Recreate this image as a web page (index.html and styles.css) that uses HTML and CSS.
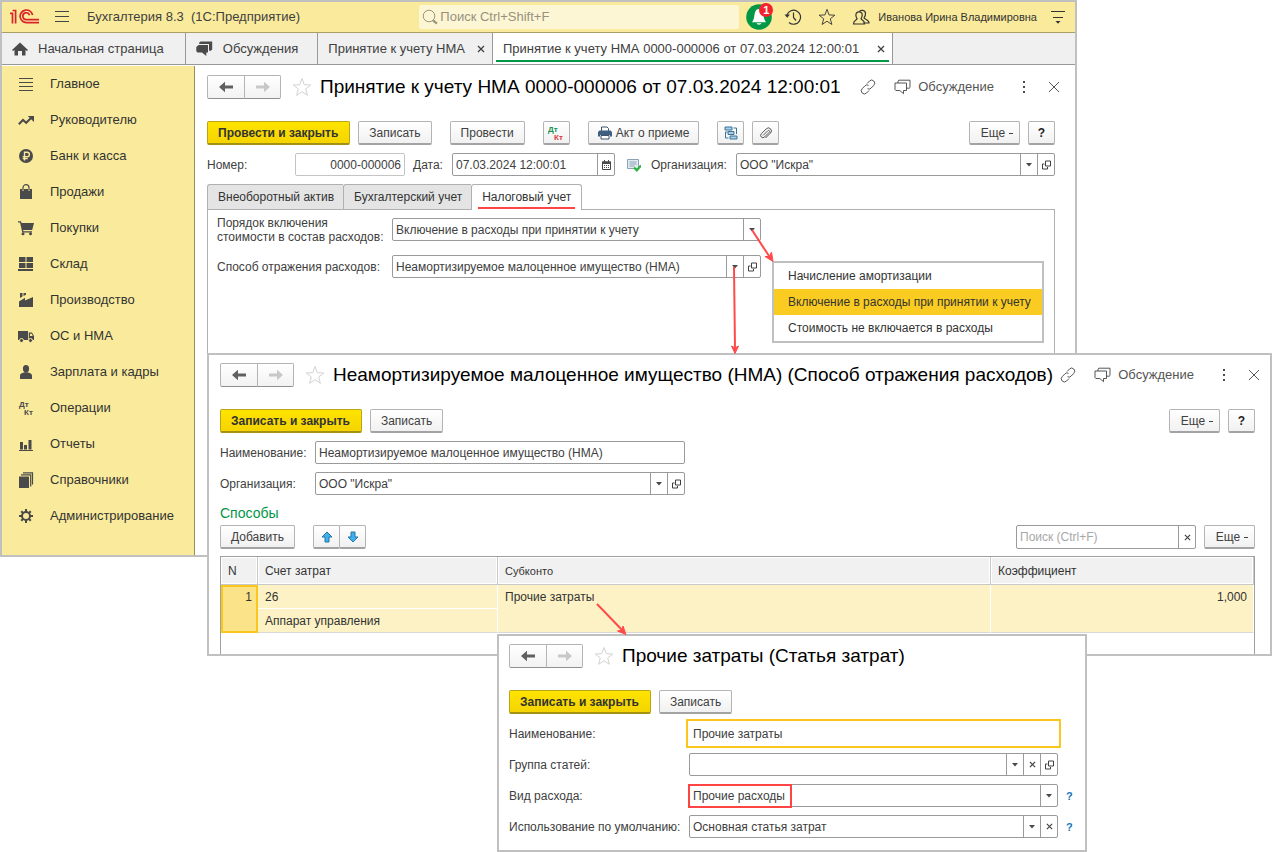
FILE: index.html
```html
<!DOCTYPE html>
<html lang="ru">
<head>
<meta charset="utf-8">
<title>Бухгалтерия 8.3 (1С:Предприятие)</title>
<link rel="stylesheet" href="styles.css">
</head>
<body>
<svg class="sprite" aria-hidden="true">
  <symbol id="back" viewBox="0 0 14 12"><path d="M0 6 6 .8V4.600h8v2.800H6v3.800z"/></symbol>
  <symbol id="forward" viewBox="0 0 14 12"><path d="M14 6 8 .8V4.600H0v2.800h8v3.800z"/></symbol>
  <symbol id="star" viewBox="0 0 20 20"><path d="M10 1.500 12.300 7.700 18.700 8 13.700 12 15.400 18.300 10 14.700 4.600 18.300 6.300 12 1.300 8 7.700 7.700z" fill="none" stroke="currentColor"/></symbol>
  <symbol id="link" viewBox="0 0 16 16"><path d="M7 4.500 9.500 2a3 3 0 0 1 4.300 4.300L11 9.200a3 3 0 0 1-3.500.5M9 11.500 6.500 14A3 3 0 0 1 2.200 9.700L5 6.800a3 3 0 0 1 3.500-.5" fill="none" stroke="currentColor"/></symbol>
  <symbol id="chat" viewBox="0 0 17 15"><path d="M1 3.500h11.500v7.500H9.500v3.200L5.800 11H1.800L1 10.200zM4 3.500V1.500l.8-.8H16v7.200l-.8.8h-2.700" fill="none" stroke="currentColor"/></symbol>
  <symbol id="close" viewBox="0 0 12 12"><path d="M1 1l10 10M11 1 1 11" stroke="currentColor"/></symbol>
  <symbol id="small-close" viewBox="0 0 8 8"><path d="M1 1l6 6M7 1 1 7" stroke="currentColor" stroke-width="1.300"/></symbol>
  <symbol id="dots" viewBox="0 0 4 12"><path d="M1 0h2v2H1zM1 5h2v2H1zM1 10h2v2H1z"/></symbol>
  <symbol id="caret" viewBox="0 0 6 4"><path d="M0 0h6L3 3.500z"/></symbol>
  <symbol id="open" viewBox="0 0 9 9"><path d="M3.500.5h5v5h-5zM2.500 3.500h-2v5h5v-2" fill="none" stroke="currentColor"/></symbol>
</svg>

<main class="desktop">
  <section class="window window-main" aria-label="Бухгалтерия 8.3">
    <header class="topbar">
      <svg class="logo" viewBox="0 0 30 16" role="img" aria-label="1С"><path d="M0 4.300h2.500v10.200M2.600 1.500h3v13M22.600 6A6.300 6.300 0 1 0 16.500 13.600H29M19.500 6.200A3.400 3.400 0 1 0 16.500 10.600H29" fill="none" stroke="#d9232b" stroke-width="1.700"/></svg>
      <button class="bare menu-button" aria-label="Меню"><svg class="i14" viewBox="0 0 14 12"><path d="M0 .5h14M0 5.500h14M0 10.500h14" stroke="#444"/></svg></button>
      <span class="app-name">Бухгалтерия 8.3 &nbsp;(1С:Предприятие)</span>
      <label class="search">
        <svg class="i16" viewBox="0 0 16 16"><circle cx="7" cy="7" r="5.800"/><path d="M11 11.300l4 3.400" stroke-width="2.200"/></svg>
        <input type="text" aria-label="Поиск" placeholder="Поиск Ctrl+Shift+F">
      </label>
      <button class="bare bell" aria-label="Уведомления">
        <svg class="i26" viewBox="0 0 26 26"><circle cx="13" cy="13" r="12.800" fill="#009846"/><path d="M13 5c-3.500 0-4 3-4.600 6.500C8 14.500 7.500 16 6 18.200h14c-1.500-2.200-2-3.700-2.400-6.700C17 8 16.500 5 13 5zM10.500 19.200h5c-.5 1.900-4.500 1.900-5 0z" fill="#fff"/></svg>
        <span class="badge">1</span>
      </button>
      <button class="bare" aria-label="История"><svg class="i18" viewBox="0 0 18 18"><g fill="none" stroke="#333" stroke-width="1.200"><path d="M3 7A7 7 0 1 1 5 14.500"/><path d="M9.500 4.500V9.500l2.500 3"/></g><path d="M.5 6.500h5.500L3.200 9.800z" fill="#333"/></svg></button>
      <button class="bare" aria-label="Избранное"><svg class="i18 dark"><use href="#star"/></svg></button>
      <button class="bare" aria-label="Пользователи"><svg class="i18" viewBox="0 0 18 18"><g fill="none" stroke="#333" stroke-width="1.200"><path d="M7.500 3.500C8 1.800 13.500 1.500 13.500 5.500c0 2.500-1 3.500-1.500 4.500 1 1.500 5 1.500 5 5h-5.500"/><path d="M7 3.800c2.500 0 3.400 1.700 3.200 3.700-.2 1.800-1 2.500-1.200 3.300.8 1.700 3.500 1.200 3.500 5.200H1.500c0-4 3-3.700 3.600-5.200C4.600 9.800 4 9 3.900 7.500c-.1-2 .8-3.700 3.100-3.700z"/></g></svg></button>
      <span class="user">Иванова Ирина Владимировна</span>
      <button class="bare" aria-label="Настройки"><svg class="i16" viewBox="0 0 16 16"><path d="M1 2.500h14M3 8.500h10" stroke="#333" stroke-width="1.200"/><path d="M5.500 12h5L8 14.800z" fill="#333"/></svg></button>
    </header>

    <nav class="tabs" aria-label="Открытые окна">
      <button class="tab"><svg class="i16" viewBox="0 0 16 16"><path d="M8 1.500 16 9l-1 1-1.500-1v5.500H10V10H6v4.500H2.500V9L1 10 0 9z"/></svg><span>Начальная страница</span></button>
      <button class="tab tab-chat"><svg class="i17" viewBox="0 0 17 16"><path d="M2.500 4H12v7.500h-1.700V15L6 11.500H1.500L.3 10.300V6z"/><path d="M3.200 3V1.500L4.700.5h11.500v8l-1.500 1.200H13V3z"/></svg><span>Обсуждения</span></button>
      <button class="tab tab-doc"><span>Принятие к учету НМА</span><svg class="i8"><use href="#small-close"/></svg></button>
      <button class="tab tab-doc active"><span>Принятие к учету НМА 0000-000006 от 07.03.2024 12:00:01</span><svg class="i8"><use href="#small-close"/></svg></button>
    </nav>

    <div class="body">
      <nav class="sidebar" aria-label="Разделы">
        <a href="#"><svg viewBox="0 0 16 16"><path d="M1 2.500h14M1 6.500h14M1 10.500h14M1 14.500h14" stroke="#4a4a4a"/></svg>Главное</a>
        <a href="#"><svg viewBox="0 0 16 16"><path d="M.8 12.300 5 8l3.200 2.800L13 6" fill="none" stroke="#4a4a4a" stroke-width="2"/><path d="M9.800 4H16v6z"/></svg>Руководителю</a>
        <a href="#"><svg viewBox="0 0 16 16"><circle cx="8" cy="8" r="7"/><path d="M6.500 12.500V4.200h2.700a2.200 2.200 0 0 1 0 4.400H4.700M4.700 10.500h5" fill="none" stroke="#faeb9c" stroke-width="1.400"/></svg>Банк и касса</a>
        <a href="#"><svg viewBox="0 0 16 16"><path d="M2 5h2.500v2h1V5h5v2h1V5H14v10H2z"/><path d="M5 5.500V3.700a3 3 0 0 1 6 0v1.800" fill="none" stroke="#4a4a4a" stroke-width="1.200"/></svg>Продажи</a>
        <a href="#"><svg viewBox="0 0 16 16"><path d="M0 1.200h3L3.600 3H16l-1.800 7H5.100l.4 1.200H14v1.200H4.300L2 2.500H0z"/><circle cx="5" cy="13.700" r="1.500"/><circle cx="12.500" cy="13.700" r="1.500"/></svg>Покупки</a>
        <a href="#"><svg viewBox="0 0 16 16"><path d="M1 1h6.500v5H1zM8.500 1H15v5H8.500zM1 7h6.500v5H1zM8.500 7H15v5H8.500zM0 13h15v2H0z"/></svg>Склад</a>
        <a href="#"><svg viewBox="0 0 16 16"><path d="M1 15V9.500l6-3.800V8.500L15 5v10zM2 1h2.500v3.500L2 6zM5.500 1H8v1.800L5.500 4z"/></svg>Производство</a>
        <a href="#"><svg viewBox="0 0 16 16"><path d="M0 3h10v9H0zM10.800 4.500H14L16 8v4h-5.200z"/><path d="M12 5.800h1.800L14.700 8H12z" fill="#faeb9c"/><g stroke="#faeb9c"><circle cx="3.500" cy="12.500" r="2"/><circle cx="12.500" cy="12.500" r="2"/></g></svg>ОС и НМА</a>
        <a href="#"><svg viewBox="0 0 16 16"><ellipse cx="8" cy="4.700" rx="3.100" ry="3.700"/><path d="M2 15v-3.500C2 9.500 5 9 6.500 8.300h3C11 9 14 9.500 14 11.500V15z"/></svg>Зарплата и кадры</a>
        <a href="#"><svg viewBox="0 0 16 16" class="dtkt"><text x="1" y="7">Дт</text><text x="6" y="15">Кт</text></svg>Операции</a>
        <a href="#"><svg viewBox="0 0 16 16"><path d="M1 14h14v1H1zM2 6h3v7.500H2zM6 9h3v4.500H6zM10.500 4h3v9.500h-3z"/></svg>Отчеты</a>
        <a href="#"><svg viewBox="0 0 16 16"><path d="M1 4.500h10V16H1z"/><path d="M3 2.800h9.700V14.500M5 .8h9.500V12.500" fill="none" stroke="#4a4a4a" stroke-width="1.200"/></svg>Справочники</a>
        <a href="#"><svg viewBox="0 0 16 16"><circle cx="8" cy="8" r="4" fill="none" stroke="#4a4a4a" stroke-width="2"/><path d="M8 1v3M8 12v3M1 8h3M12 8h3M3.200 3.200l1.900 1.900M10.900 10.900l1.900 1.900M12.800 3.200l-1.900 1.900M5.100 10.900l-1.900 1.900" stroke="#4a4a4a" stroke-width="2"/></svg>Администрирование</a>
      </nav>

      <div class="form">
        <div class="title-row">
          <div class="history"><button aria-label="Назад"><svg><use href="#back"/></svg></button><button aria-label="Вперед" disabled><svg><use href="#forward"/></svg></button></div>
          <svg class="fav"><use href="#star"/></svg>
          <h1>Принятие к учету НМА 0000-000006 от 07.03.2024 12:00:01</h1>
          <div class="title-tools">
            <button class="bare" aria-label="Ссылка"><svg class="i16"><use href="#link"/></svg></button>
            <button class="bare discuss"><svg class="i17"><use href="#chat"/></svg>Обсуждение</button>
            <button class="bare dots" aria-label="Действия"><svg><use href="#dots"/></svg></button>
            <button class="bare" aria-label="Закрыть"><svg class="i12"><use href="#close"/></svg></button>
          </div>
        </div>

        <div class="toolbar">
          <button class="btn primary">Провести и закрыть</button>
          <button class="btn">Записать</button>
          <button class="btn apart">Провести</button>
          <button class="btn square apart" aria-label="Дт Кт"><svg class="i16 dtkt" viewBox="0 0 16 16"><text x="0" y="7" fill="#15924b">Дт</text><text x="6" y="15" fill="#e03a3e">Кт</text></svg></button>
          <button class="btn apart print"><svg class="i14" viewBox="0 0 14 14"><path d="M3.500 5V1h5.500l1.500 1.500V5" fill="#fff" stroke="#3f546b"/><path d="M0 6l1.500-1.500h11L14 6v4.500h-2V9H2v1.500H0z" fill="#3f5f80"/><path d="M3 9.500h8v3.500H3z" fill="#fff" stroke="#3f546b"/></svg>Акт о приеме</button>
          <button class="btn square apart" aria-label="Структура"><svg class="i14" viewBox="0 0 14 14"><g fill="#a9cfe6" stroke="#3c7499"><path d="M1 1h7v3H1zM4 5.500h6v3H4zM6 10h7v3H6z"/><path d="M9.500 2h3v6M3.500 6h-2v6h3" fill="none"/></g></svg></button>
          <button class="btn square" aria-label="Вложения"><svg class="i14" viewBox="0 0 14 14"><path d="M4 9.500 8.800 4.700a1 1 0 0 1 1.500 1.500L5.500 11A2.200 2.200 0 0 1 2.300 7.800l5-5a2.900 2.900 0 0 1 4.200 4.200L6.500 12" fill="none" stroke="#555"/></svg></button>
          <span class="spacer"></span>
          <button class="btn more">Еще <i></i></button>
          <button class="btn square help">?</button>
        </div>

        <div class="doc-fields">
          <label class="number-label" for="number">Номер:</label>
          <div class="field pale number"><input id="number" type="text" value="0000-000006"></div>
          <label class="date-label" for="date">Дата:</label>
          <div class="field date"><input id="date" type="text" value="07.03.2024 12:00:01"><button class="cell" aria-label="Календарь"><svg class="i9" viewBox="0 0 9 10"><path d="M.5 2h8v7.500h-8z" fill="none" stroke="#444"/><path d="M0 1.500h9V4H0zM2 0h1v2H2zM6 0h1v2H6zM2 5h1v1H2zM4 5h1v1H4zM6 5h1v1H6zM2 7h1v1H2zM4 7h1v1H4zM6 7h1v1H6z"/></svg></button></div>
          <svg class="i14 posted" viewBox="0 0 14 14"><path d="M.5 1.500h11v9H.5z" fill="#e3ebf2" stroke="#8ba0b3"/><path d="M2.500 4h7M2.500 6h7M2.500 8h5" stroke="#8ba0b3"/><path d="M7 9.500l2.800 2.800L14 7.500" fill="none" stroke="#2fb344" stroke-width="2.200"/></svg>
          <label class="org-label" for="org">Организация:</label>
          <div class="field grow"><select id="org"><option>ООО "Искра"</option></select><span class="cell"><svg class="caret"><use href="#caret"/></svg></span><button class="cell" aria-label="Открыть"><svg class="i9"><use href="#open"/></svg></button></div>
        </div>

        <div class="pages" role="tablist">
          <button role="tab">Внеоборотный актив</button>
          <button role="tab">Бухгалтерский учет</button>
          <button role="tab" aria-selected="true"><span>Налоговый учет</span></button>
        </div>
        <div class="page">
          <label for="order">Порядок включения<br>стоимости в состав расходов:</label>
          <div class="field"><select id="order"><option>Включение в расходы при принятии к учету</option><option>Начисление амортизации</option><option>Стоимость не включается в расходы</option></select><span class="cell"><svg class="caret"><use href="#caret"/></svg></span></div>
          <label for="method">Способ отражения расходов:</label>
          <div class="field"><select id="method"><option>Неамортизируемое малоценное имущество (НМА)</option></select><span class="cell"><svg class="caret"><use href="#caret"/></svg></span><button class="cell" aria-label="Открыть"><svg class="i9"><use href="#open"/></svg></button></div>
        </div>
      </div>
    </div>
  </section>

  <ul class="dropdown" role="listbox" aria-label="Порядок включения">
    <li role="option">Начисление амортизации</li>
    <li role="option" aria-selected="true">Включение в расходы при принятии к учету</li>
    <li role="option">Стоимость не включается в расходы</li>
  </ul>

  <section class="window window-method" aria-label="Способ отражения расходов">
    <div class="title-row">
      <div class="history"><button aria-label="Назад"><svg><use href="#back"/></svg></button><button aria-label="Вперед" disabled><svg><use href="#forward"/></svg></button></div>
      <svg class="fav"><use href="#star"/></svg>
      <h2>Неамортизируемое малоценное имущество (НМА) (Способ отражения расходов)</h2>
      <div class="title-tools">
        <button class="bare" aria-label="Ссылка"><svg class="i16"><use href="#link"/></svg></button>
        <button class="bare discuss"><svg class="i17"><use href="#chat"/></svg>Обсуждение</button>
        <button class="bare dots" aria-label="Действия"><svg><use href="#dots"/></svg></button>
        <button class="bare" aria-label="Закрыть"><svg class="i12"><use href="#close"/></svg></button>
      </div>
    </div>
    <div class="toolbar">
      <button class="btn primary">Записать и закрыть</button>
      <button class="btn">Записать</button>
      <span class="spacer"></span>
      <button class="btn more">Еще <i></i></button>
      <button class="btn square help">?</button>
    </div>
    <div class="method-fields">
      <label for="m-name">Наименование:</label>
      <div class="field"><input id="m-name" type="text" value="Неамортизируемое малоценное имущество (НМА)"></div>
      <label for="m-org">Организация:</label>
      <div class="field"><select id="m-org"><option>ООО "Искра"</option></select><span class="cell"><svg class="caret"><use href="#caret"/></svg></span><button class="cell" aria-label="Открыть"><svg class="i9"><use href="#open"/></svg></button></div>
    </div>
    <h3>Способы</h3>
    <div class="toolbar table-bar">
      <button class="btn">Добавить</button>
      <div class="pair">
        <button class="btn square" aria-label="Вверх"><svg class="i12" viewBox="0 0 12 12"><path d="M6 1l5 5H8v5H4V6H1z" fill="#3fb0ee" stroke="#2575a8"/></svg></button><button class="btn square" aria-label="Вниз"><svg class="i12" viewBox="0 0 12 12"><path d="M6 11l5-5H8V1H4v5H1z" fill="#3fb0ee" stroke="#2575a8"/></svg></button>
      </div>
      <span class="spacer"></span>
      <div class="field find"><input type="text" aria-label="Поиск" placeholder="Поиск (Ctrl+F)"><button class="cell" aria-label="Очистить"><svg class="i7"><use href="#small-close"/></svg></button></div>
      <button class="btn more">Еще <i></i></button>
    </div>
    <div class="grid">
      <table>
        <colgroup><col class="c-n"><col class="c-acc"><col><col class="c-k"></colgroup>
        <thead><tr><th>N</th><th>Счет затрат</th><th class="sub">Субконто</th><th>Коэффициент</th></tr></thead>
        <tbody>
          <tr><td rowspan="2" class="num current">1</td><td>26</td><td rowspan="2" class="last">Прочие затраты</td><td rowspan="2" class="num last">1,000</td></tr>
          <tr><td class="last">Аппарат управления</td></tr>
        </tbody>
      </table>
    </div>
  </section>

  <section class="window window-item" aria-label="Статья затрат">
    <div class="title-row">
      <div class="history"><button aria-label="Назад"><svg><use href="#back"/></svg></button><button aria-label="Вперед" disabled><svg><use href="#forward"/></svg></button></div>
      <svg class="fav"><use href="#star"/></svg>
      <h2>Прочие затраты (Статья затрат)</h2>
    </div>
    <div class="toolbar">
      <button class="btn primary">Записать и закрыть</button>
      <button class="btn">Записать</button>
    </div>
    <div class="item-fields">
      <label for="i-name">Наименование:</label>
      <div class="field focused"><input id="i-name" type="text" value="Прочие затраты"></div>
      <label for="i-group">Группа статей:</label>
      <div class="field"><select id="i-group"><option></option></select><span class="cell"><svg class="caret"><use href="#caret"/></svg></span><button class="cell" aria-label="Очистить"><svg class="i7"><use href="#small-close"/></svg></button><button class="cell" aria-label="Открыть"><svg class="i9"><use href="#open"/></svg></button></div>
      <label for="i-kind">Вид расхода:</label>
      <div class="field"><select id="i-kind"><option>Прочие расходы</option></select><span class="cell"><svg class="caret"><use href="#caret"/></svg></span><span class="mark"></span></div>
      <a href="#" class="hint">?</a>
      <label for="i-use">Использование по умолчанию:</label>
      <div class="field"><select id="i-use"><option>Основная статья затрат</option></select><span class="cell"><svg class="caret"><use href="#caret"/></svg></span><button class="cell" aria-label="Очистить"><svg class="i7"><use href="#small-close"/></svg></button></div>
      <a href="#" class="hint">?</a>
    </div>
  </section>

  <svg class="arrow arrow-order" viewBox="0 0 26 36"><path d="M2 1 21 30"/><path class="head" d="M23 32.500 15 27.500 19.500 27.500 21.500 23z"/></svg>
  <svg class="arrow arrow-method" viewBox="0 0 12 90"><path d="M5 1 6 83"/><path class="head" d="M6 87.500 2.500 80 6 82 9.500 80z"/></svg>
  <svg class="arrow arrow-item" viewBox="0 0 32 34"><path d="M2 1 29 29"/><path class="head" d="M31 31.500 22.500 28 27 27 28 23z"/></svg>
</main>
</body>
</html>
```

FILE: styles.css
```css
* { box-sizing: border-box; }

body {
  margin: 0;
  background: #fff;
  color: #404040;
  font: 12px/14px "Liberation Sans", Arial, sans-serif;
}

button, input, select { font: inherit; color: inherit; margin: 0; }
h1, h2, h3 { margin: 0; font-weight: normal; }
svg { fill: #4a4a4a; flex: none; display: block; }
.sprite { position: absolute; width: 0; height: 0; }

.i7 { width: 7px; height: 7px; }
.i8 { width: 8px; height: 8px; }
.i9 { width: 9px; height: 10px; }
.i12 { width: 12px; height: 12px; }
.i14 { width: 14px; height: 14px; }
.i16 { width: 16px; height: 16px; }
.i17 { width: 17px; height: 16px; }
.i18 { width: 18px; height: 18px; }
.i26 { width: 26px; height: 26px; }
.dark { color: #333; }
.caret { width: 6px; height: 4px; }
.dtkt text { font: bold 8px "Liberation Sans", sans-serif; }

/* Windows */
.desktop { position: relative; min-height: 852px; }
.window { position: absolute; background: #fff; border: 2px solid #c0c0c0; }
.window-main { left: 0; right: 195px; top: 0; }
.window-method { left: 207px; right: 0; top: 353px; padding: 8px 15px 0 11px; }
.window-item { left: 497px; right: 185px; top: 634px; padding: 8px 27px 12px 10px; }

.bare { display: flex; align-items: center; padding: 0; border: 0; background: none; }

/* Top bar */
.topbar {
  display: flex;
  align-items: center;
  height: 31px;
  padding: 0 9px 0 8px;
  background: #faeb9c;
  border-bottom: 1px solid #a89e68;
  font-size: 13px;
}
.logo { width: 30px; height: 16px; margin-right: 15px; }
.menu-button { margin-right: 18px; }
.app-name { flex: 1; white-space: nowrap; }
.search {
  display: flex;
  align-items: center;
  gap: 2px;
  width: 320px;
  height: 24px;
  padding: 0 3px;
  margin-right: 7px;
  background: #fdf6d5;
  border-radius: 2px;
}
.search svg { fill: none; stroke: #9b957a; }
.search input { flex: 1; min-width: 0; padding: 0; border: 0; background: none; outline: 0; }
.search input::placeholder { color: #97917c; opacity: 1; }
.bell { position: relative; margin-right: 12px; }
.badge {
  position: absolute;
  right: -1px;
  top: -1px;
  width: 14px;
  height: 14px;
  border-radius: 7px;
  background: #f5222d;
  color: #fff;
  font: bold 11px/14px "Liberation Sans", sans-serif;
  text-align: center;
}
.topbar > .bare + .bare { margin-right: 16px; }
.topbar > .bare + .user { margin-left: -8px; }
.user { margin-right: 13px; font-size: 11px; color: #333; white-space: nowrap; }

/* Open window tabs */
.tabs {
  display: flex;
  height: 32px;
  margin-bottom: 1px;
  background: #f0f0f0;
  border-bottom: 1px solid #999;
}
.tab {
  display: flex;
  align-items: center;
  gap: 10px;
  padding: 0 21px 0 10px;
  border: 0;
  border-right: 1px solid #999;
  background: none;
  font-size: 13px;
  white-space: nowrap;
}
.tab-chat { padding-right: 19px; }
.tab-doc { gap: 12px; padding-right: 7px; }
.active { position: relative; gap: 18px; background: #fff; }
.active::after {
  content: "";
  position: absolute;
  left: 3px;
  right: 3px;
  bottom: 2px;
  height: 2px;
  background: #009846;
}

.body { display: flex; }
.sidebar {
  display: flex;
  flex-direction: column;
  width: 193px;
  padding-bottom: 21px;
  background: #faeb9c;
  border-right: 1px solid #96905a;
  font-size: 13px;
}
.sidebar a {
  display: flex;
  align-items: center;
  gap: 16px;
  height: 36px;
  padding-left: 16px;
  color: #333;
  text-decoration: none;
}
.sidebar svg { width: 16px; height: 16px; }

/* Forms */
.form { flex: 1; min-width: 0; display: flex; flex-direction: column; padding: 9px 20px 0 12px; }
.title-row { display: flex; align-items: center; margin-bottom: 22px; height: 24px; }
.history { display: flex; }
.history button {
  display: flex;
  align-items: center;
  justify-content: center;
  width: 38px;
  height: 24px;
  padding: 0;
  border: 1px solid #b4b4b4;
  border-bottom-color: #8f8f8f;
  border-radius: 2px 0 0 2px;
  background: linear-gradient(#fff, #f2f2f2);
}
.history button + button { width: 37px; margin-left: -1px; border-radius: 0 2px 2px 0; }
.history svg { width: 14px; height: 12px; fill: #606060; }
.history :disabled svg { fill: #c8c8c8; }
.fav { width: 20px; height: 20px; margin: 0 8px 0 11px; color: #d2d2d2; }
h1, h2 { font-size: 19px; line-height: 22px; color: #000; white-space: nowrap; }
.title-tools { display: flex; align-items: center; margin-left: auto; color: #555; font-size: 13px; }
.form .title-tools { margin-right: -5px; }
.discuss { gap: 7px; margin: 0 28px 0 18px; }
.dots { margin-right: 22px; }
.dots svg { width: 4px; height: 12px; }
.window-method .title-tools { margin-right: -5px; }

.toolbar { display: flex; gap: 8px; margin-bottom: 8px; }
.spacer { flex: 1; }
.btn {
  display: flex;
  align-items: center;
  justify-content: center;
  gap: 4px;
  height: 24px;
  padding: 0 10px;
  border: 1px solid #b4b4b4;
  border-bottom: 2px solid #a3a3a3;
  border-radius: 2px;
  background: linear-gradient(#fff, #f1f1f1);
  white-space: nowrap;
}
.primary {
  padding-right: 11px;
  border-color: #b9a515;
  border-bottom-color: #a39111;
  background: linear-gradient(#ffe400, #f5d400);
  color: #333;
  font-weight: bold;
}
.apart { margin-left: 10px; }
.print { padding: 0 9px; }
.square { width: 27px; padding: 0; }
.more { width: 51px; padding: 0 0 0 5px; }
.more i { width: 4px; height: 1px; margin-top: 2px; background: #444; }
.help { font-weight: bold; color: #222; }

.field {
  position: relative;
  display: flex;
  height: 23px;
  border: 1px solid #9a9a9a;
  border-radius: 2px;
  background: #fff;
}
.field input, .field select {
  flex: 1;
  min-width: 0;
  padding: 0 3px;
  border: 0;
  background: none;
  outline: 0;
  appearance: none;
}
.field input::placeholder { color: #a8a8a8; opacity: 1; }
.cell {
  display: flex;
  align-items: center;
  justify-content: center;
  width: 17px;
  padding: 0;
  border: 0;
  border-left: 1px solid #9a9a9a;
  background: none;
}
span.cell { pointer-events: none; }
.pale { border-color: #c4c4c4; }
.focused { border-color: transparent; outline: 2px solid #f9c71e; outline-offset: 1px; border-radius: 0; }
.grow { flex: 1; }

.doc-fields { display: flex; align-items: center; margin-bottom: 8px; }
.number-label { width: 88px; }
.number { width: 110px; }
.number input { text-align: right; }
.date-label { width: 47px; padding-left: 8px; }
.date { width: 163px; }
.posted { margin: 0 10px 0 12px; }
.org-label { width: 85px; }

.pages { display: flex; }
.pages button {
  height: 25px;
  padding: 0 9px 0 10px;
  border: 1px solid #b0b0b0;
  border-bottom: 0;
  border-right: 0;
  background: #e4e4e4;
  border-radius: 3px 0 0 0;
  color: #333;
}
.pages [aria-selected] {
  position: relative;
  height: 26px;
  margin-bottom: -1px;
  padding: 0 6px;
  border-right: 1px solid #b0b0b0;
  border-radius: 3px 3px 0 0;
  background: #fff;
}
.pages span { display: block; padding: 3px 4px; border-bottom: 2px solid #f44; }
.page {
  flex: 1;
  display: grid;
  grid-template-columns: 175px 369px;
  grid-auto-rows: 23px;
  row-gap: 14px;
  align-items: center;
  padding: 8px 9px;
  border: 1px solid #b0b0b0;
  border-bottom: 0;
}

.dropdown {
  position: absolute;
  left: 772px;
  top: 261px;
  margin: 0;
  padding: 0;
  border: 2px solid #c0c0c0;
  background: #fff;
  list-style: none;
  color: #333;
}
.dropdown li { padding: 6px 11px 6px 14px; }
.dropdown [aria-selected] { background: #facb20; }

/* Expense method window */
.method-fields {
  display: grid;
  grid-template-columns: 95px 370px;
  gap: 8px 0;
  align-items: center;
  margin-bottom: 10px;
}
h3 { margin-bottom: 4px; font-size: 14px; line-height: 16px; color: #009646; }
.pair { display: flex; margin-left: 10px; }
.pair .btn + .btn { margin-left: -1px; }
.find { width: 180px; height: 24px; }
.table-bar { margin-bottom: 7px; }
.grid { height: 98px; border: 1px solid #a0a0a0; border-bottom: 0; overflow: hidden; }
table { width: 100%; table-layout: fixed; border-collapse: separate; border-spacing: 0; color: #333; }
.c-n { width: 37px; }
.c-acc { width: 240px; }
.c-k { width: 263px; }
th, td { padding: 0 7px; border-right: 1px solid #fff; text-align: left; }
th {
  height: 28px;
  background: #f1f1f1;
  border-right-color: #c8c8c8;
  border-bottom: 1px solid #c8c8c8;
  font-weight: normal;
  box-shadow: inset -1px -1px #fff, inset 1px 1px #fff;
}
.sub { font-size: 11px; }
td { height: 24px; background: #fdf2c5; border-bottom: 1px solid #fff; vertical-align: top; padding-top: 5px; }
.last { border-bottom-color: #d8d8d8; }
.num { padding-right: 6px; text-align: right; }
.current { padding: 3px 4px; border: 2px solid #f9c71e; background: #fbe389; }

/* Cost item window */
.item-fields {
  display: grid;
  grid-template-columns: 180px 1fr 0;
  grid-auto-rows: 23px;
  row-gap: 8px;
  align-items: center;
}
.item-fields label { grid-column: 1; }
.hint { padding-left: 8px; color: #1a75bb; font-size: 11px; font-weight: bold; text-decoration: none; }
.mark { position: absolute; left: -2px; top: -1px; width: 104px; height: 24px; border: 2px solid #f44; pointer-events: none; }

/* Callout arrows */
.arrow { position: absolute; fill: none; stroke: #ff4a4a; stroke-width: 2; overflow: visible; pointer-events: none; }
.arrow .head { fill: #ff4a4a; stroke-width: 1; }
.arrow-order { left: 750px; top: 229px; width: 26px; height: 36px; }
.arrow-method { left: 729px; top: 266px; width: 12px; height: 90px; }
.arrow-item { left: 595px; top: 603px; width: 32px; height: 34px; }
```
